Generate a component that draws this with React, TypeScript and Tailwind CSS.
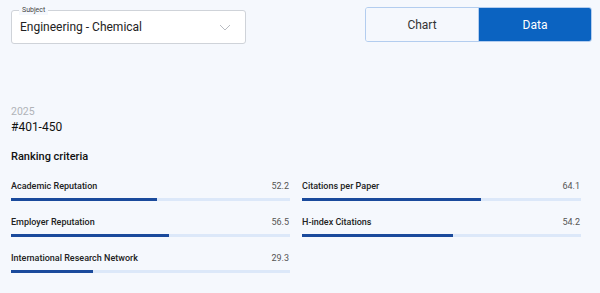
import React from "react";

const left = [
  { label: "Academic Reputation", value: 52.2 },
  { label: "Employer Reputation", value: 56.5 },
  { label: "International Research Network", value: 29.3 },
];
const right = [
  { label: "Citations per Paper", value: 64.1 },
  { label: "H-index Citations", value: 54.2 },
];

function Row({ label, value }: { label: string; value: number }) {
  return (
    <div className="flex flex-col">
      <div className="flex items-center justify-between h-[16px]">
        <span className="text-[9px] font-medium text-[#222]">{label}</span>
        <span className="text-[9px] text-[#555] pr-[1px]">{value}</span>
      </div>
      <div className="mt-[3px] h-[3px] bg-[#dce8f9] w-full">
        <div className="h-full bg-[#1a4a9c]" style={{ width: `${value}%` }} />
      </div>
    </div>
  );
}

export default function App() {
  return (
    <div
      className="w-[600px] h-[293px] bg-[#f5f8fd] overflow-hidden"
      style={{ fontFamily: "Roboto, 'Noto Sans', sans-serif" }}
    >
      <div className="flex justify-between pt-[7px] pl-[11px] pr-[8px]">
        <div className="relative mt-[3px] w-[235px] h-[34px] border border-[#cfd3d9] rounded-[3px] bg-white flex items-center justify-between pl-[8px] pr-[14px]">
          <span className="absolute -top-[6px] left-[7px] px-[3px] bg-[#f5f8fd] text-[7px] leading-[10px] text-[#444]">
            Subject
          </span>
          <span className="text-[12px] text-[#222]">Engineering - Chemical</span>
          <svg width="12" height="7" viewBox="0 0 12 7" fill="none">
            <path d="M1 1l5 5 5-5" stroke="#b9bcc2" strokeWidth="1" />
          </svg>
        </div>
        <div className="flex w-[227px] h-[35px] border border-[#b3cdef] rounded-[3px] overflow-hidden">
          <div className="flex-1 flex items-center justify-center text-[12px] text-[#333] bg-[#f5f8fd] border-r border-[#b3cdef]">
            Chart
          </div>
          <div className="flex-1 flex items-center justify-center text-[12px] text-white bg-[#0b63c1]">
            Data
          </div>
        </div>
      </div>
      <div className="pl-[11px] pr-[19px] mt-[61px]">
        <div className="text-[10.5px] text-[#b0b3b8] leading-[14px]">2025</div>
        <div className="text-[12px] text-[#111] leading-[16px]">#401-450</div>
        <div className="text-[11px] font-medium text-[#111] leading-[16px] mt-[14px]">
          Ranking criteria
        </div>
        <div className="grid grid-cols-2 gap-x-[12px] mt-[14px]">
          <div className="flex flex-col gap-[14px]">
            {left.map((r) => (
              <Row key={r.label} {...r} />
            ))}
          </div>
          <div className="flex flex-col gap-[14px]">
            {right.map((r) => (
              <Row key={r.label} {...r} />
            ))}
          </div>
        </div>
      </div>
    </div>
  );
}
